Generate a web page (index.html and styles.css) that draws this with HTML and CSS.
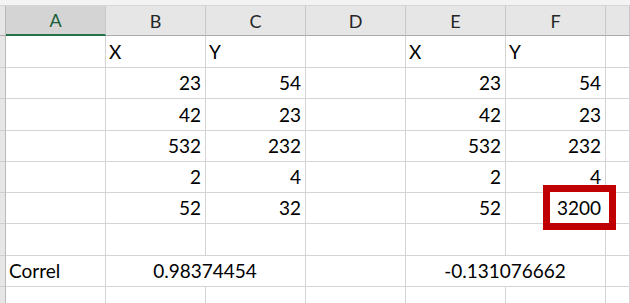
FILE: index.html
```html
<!DOCTYPE html>
<html lang="en">
<head>
<meta charset="utf-8">
<title>Correl</title>
<link rel="stylesheet" href="styles.css">
</head>
<body>
<div class="sheet">
  <div class="strip"></div>

  <div class="corner"></div>
  <div class="ch sel">A</div>
  <div class="ch">B</div>
  <div class="ch">C</div>
  <div class="ch">D</div>
  <div class="ch">E</div>
  <div class="ch">F</div>
  <div class="ch"></div>

  <div class="rh"></div>
  <div class="c"></div>
  <div class="c">X</div>
  <div class="c">Y</div>
  <div class="c"></div>
  <div class="c">X</div>
  <div class="c">Y</div>
  <div class="c"></div>

  <div class="rh"></div>
  <div class="c"></div>
  <div class="c num">23</div>
  <div class="c num">54</div>
  <div class="c"></div>
  <div class="c num">23</div>
  <div class="c num">54</div>
  <div class="c"></div>

  <div class="rh"></div>
  <div class="c"></div>
  <div class="c num">42</div>
  <div class="c num">23</div>
  <div class="c"></div>
  <div class="c num">42</div>
  <div class="c num">23</div>
  <div class="c"></div>

  <div class="rh"></div>
  <div class="c"></div>
  <div class="c num">532</div>
  <div class="c num">232</div>
  <div class="c"></div>
  <div class="c num">532</div>
  <div class="c num">232</div>
  <div class="c"></div>

  <div class="rh"></div>
  <div class="c"></div>
  <div class="c num">2</div>
  <div class="c num">4</div>
  <div class="c"></div>
  <div class="c num">2</div>
  <div class="c num">4</div>
  <div class="c"></div>

  <div class="rh"></div>
  <div class="c"></div>
  <div class="c num">52</div>
  <div class="c num">32</div>
  <div class="c"></div>
  <div class="c num">52</div>
  <div class="c num"><span class="val">3200</span></div>
  <div class="c"></div>

  <div class="rh"></div>
  <div class="c"></div>
  <div class="c"></div>
  <div class="c"></div>
  <div class="c"></div>
  <div class="c"></div>
  <div class="c"></div>
  <div class="c"></div>

  <div class="rh"></div>
  <div class="c">Correl</div>
  <div class="c merge">0.98374454</div>
  <div class="c"></div>
  <div class="c merge">-0.131076662</div>
  <div class="c"></div>

  <div class="rh"></div>
  <div class="c"></div>
  <div class="c"></div>
  <div class="c"></div>
  <div class="c"></div>
  <div class="c"></div>
  <div class="c"></div>
  <div class="c"></div>

  <div class="mark"></div>
</div>
</body>
</html>
```

FILE: styles.css
```css
* {
  box-sizing: border-box;
}

html, body {
  margin: 0;
  background: #fff;
}

body {
  font-family: Lato, "Open Sans", "Liberation Sans", sans-serif;
  overflow: hidden;
}

/* worksheet grid: row-header strip, columns A-F, then the edge of G */
.sheet {
  position: relative;
  width: 630px;
  height: 303px;
  overflow: hidden;
  display: grid;
  grid-template-columns: 6px repeat(6, 100px) 1fr;
  grid-template-rows: 6px 30px 32px repeat(8, 31.25px) 1fr;
}

.strip {
  grid-column: 1 / -1;
  background: #f3f3f3;
  border-bottom: 1px solid #d6d6d6;
}

.corner {
  background: #e6e6e6;
  border-right: 1px solid #b8b8b8;
  border-bottom: 1px solid #ababab;
}

/* column headers */
.ch {
  background: #e6e6e6;
  border-right: 1px solid #c8c8c8;
  border-bottom: 1px solid #ababab;
  display: flex;
  align-items: center;
  justify-content: center;
  font-size: 18px;
  color: #262626;
}

.ch.sel {
  background: #d4d4d4;
  border-bottom: 2px solid #217346;
  color: #185c37;
}

/* row headers */
.rh {
  background: #e6e6e6;
  border-right: 1px solid #b8b8b8;
  border-bottom: 1px solid #cfcfcf;
}

/* cells */
.c {
  border-right: 1px solid #d4d4d4;
  border-bottom: 1px solid #d4d4d4;
  display: flex;
  align-items: flex-end;
  padding: 0 4px 3px 3px;
  font-size: 19px;
  line-height: 1.2;
  color: #000;
  white-space: nowrap;
}

.c.num {
  justify-content: flex-end;
}

.c.merge {
  grid-column: span 2;
  justify-content: center;
}

.val {
  position: relative;
  z-index: 2;
}

/* red highlight frame drawn over the sheet */
.mark {
  position: absolute;
  left: 543px;
  top: 185px;
  width: 73px;
  height: 45px;
  border: 7px solid #c00000;
  background: #fff;
  z-index: 1;
}
```
